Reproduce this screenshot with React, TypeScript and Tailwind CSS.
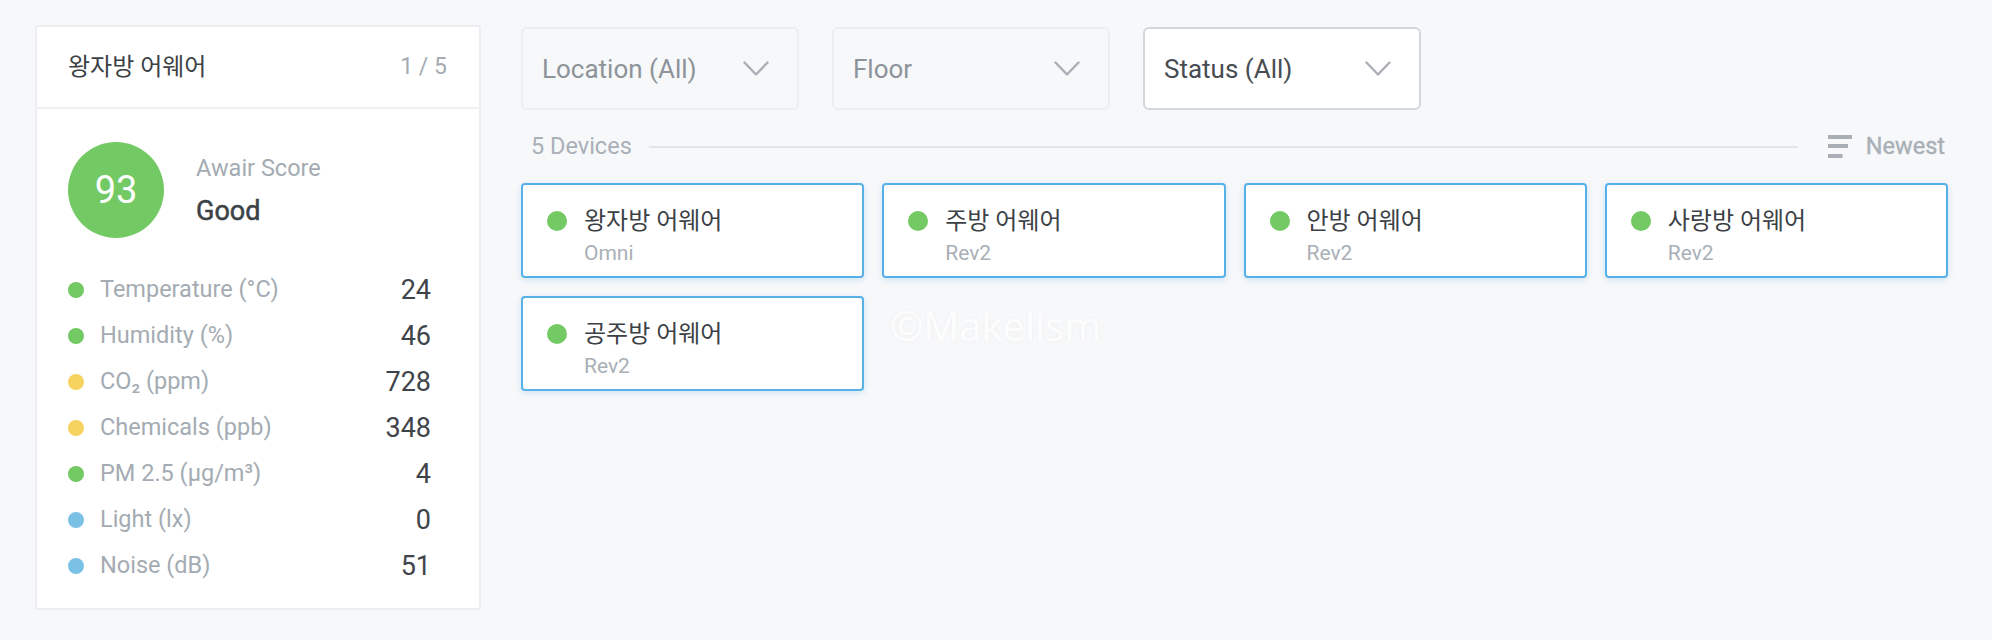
const FONT = "font-['Roboto','Noto_Sans_CJK_KR',sans-serif]";

type Reading = { label: React.ReactNode; value: string; color: string };

const readings: Reading[] = [
  { label: "Temperature (°C)", value: "24", color: "bg-[#73c964]" },
  { label: "Humidity (%)", value: "46", color: "bg-[#73c964]" },
  { label: "CO₂ (ppm)", value: "728", color: "bg-[#f6d35e]" },
  { label: "Chemicals (ppb)", value: "348", color: "bg-[#f6d35e]" },
  { label: "PM 2.5 (µg/m³)", value: "4", color: "bg-[#73c964]" },
  { label: "Light (lx)", value: "0", color: "bg-[#7bc1e5]" },
  { label: "Noise (dB)", value: "51", color: "bg-[#7bc1e5]" },
];

const devices = [
  { name: "왕자방 어웨어", model: "Omni" },
  { name: "주방 어웨어", model: "Rev2" },
  { name: "안방 어웨어", model: "Rev2" },
  { name: "사랑방 어웨어", model: "Rev2" },
  { name: "공주방 어웨어", model: "Rev2" },
];

function Chevron() {
  return (
    <svg width="26" height="16" viewBox="0 0 26 16" fill="none" className="shrink-0">
      <path d="M1.5 1.5 L13 13.5 L24.5 1.5" stroke="#a9afb5" strokeWidth="2.4" strokeLinecap="round" strokeLinejoin="round" />
    </svg>
  );
}

function Filter({ label, active }: { label: string; active?: boolean }) {
  return (
    <div
      className={`flex h-[83px] w-[278px] items-center justify-between rounded-[6px] border-2 pl-[19px] pr-[28px] ${
        active ? "border-[#d3d7dc] bg-white text-[#474c52]" : "border-[#eceef1] bg-[#f7f8fa] text-[#8d9399]"
      }`}
    >
      <span className="text-[26px] leading-none">{label}</span>
      <Chevron />
    </div>
  );
}

function SummaryPanel() {
  return (
    <aside className="w-[446px] shrink-0 rounded-[3px] border-2 border-[#eceef1] bg-white">
      <div className="flex h-[82px] items-center justify-between border-b-2 border-[#eff1f3] pl-[31px] pr-[32px]">
        <span className="text-[24px] text-[#3c4146]">왕자방 어웨어</span>
        <span className="text-[23px] text-[#a4abb2]">1 / 5</span>
      </div>
      <div className="pb-[19px] pl-[31px] pr-[48px] pt-[33px]">
        <div className="flex items-center gap-[32px]">
          <div className="flex h-[96px] w-[96px] items-center justify-center rounded-full bg-[#73c964] text-[38px] text-white">
            93
          </div>
          <div className="flex flex-col">
            <span className="text-[23.5px] leading-[30px] text-[#a4abb2]">Awair Score</span>
            <span className="mt-[12px] text-[27px] leading-[32px] text-[#3c4146] [-webkit-text-stroke:0.5px_#3c4146]">
              Good
            </span>
          </div>
        </div>
        <ul className="mt-[29px]">
          {readings.map((r) => (
            <li key={r.value + r.color} className="flex h-[46px] items-center">
              <span className={`h-[16px] w-[16px] rounded-full ${r.color}`} />
              <span className="ml-[16px] flex-1 text-[23.5px] text-[#a4abb2]">{r.label}</span>
              <span className="text-[27px] text-[#3f444a]">{r.value}</span>
            </li>
          ))}
        </ul>
      </div>
    </aside>
  );
}

function SortIcon() {
  return (
    <svg width="24" height="23" viewBox="0 0 24 23" className="shrink-0">
      <rect x="0" y="0" width="24" height="4" fill="#a9afb5" />
      <rect x="0" y="9" width="20" height="4" fill="#a9afb5" />
      <rect x="0" y="19" width="14.5" height="4" fill="#a9afb5" />
    </svg>
  );
}

function DeviceCard({ name, model }: { name: string; model: string }) {
  return (
    <div className="h-[95px] rounded-[4px] border-2 border-[#58b0e8] bg-white pl-[24px] pt-[20px] shadow-[0_2px_6px_rgba(88,176,232,0.25)]">
      <div className="flex items-center gap-[17px]">
        <span className="h-[20px] w-[20px] rounded-full bg-[#73c964]" />
        <span className="text-[24px] leading-[32px] text-[#3c4146]">{name}</span>
      </div>
      <div className="ml-[37px] mt-[3px] text-[21px] leading-[26px] text-[#a9b0b7]">{model}</div>
    </div>
  );
}

export default function App() {
  return (
    <div className={`${FONT} relative flex h-[640px] w-[1992px] gap-[40px] bg-[#f7f8fa] pl-[35px] pt-[25px]`}>
      <div className="h-[585px]">
        <SummaryPanel />
      </div>
      <main className="w-[1427px]">
        <div className="mt-[2px] flex gap-[33px]">
          <Filter label="Location (All)" />
          <Filter label="Floor" />
          <Filter label="Status (All)" active />
        </div>
        <div className="mt-[20px] flex h-[33px] items-center pl-[10px] pr-[3px]">
          <span className="text-[23.5px] text-[#a9b0b7]">5 Devices</span>
          <div className="ml-[17px] mr-[30px] h-[2px] flex-1 bg-[#e3e6e9]" />
          <SortIcon />
          <span className="ml-[14px] text-[23.5px] text-[#a9b0b7] [-webkit-text-stroke:0.4px_#a9b0b7]">Newest</span>
        </div>
        <div className="mt-[20px] grid grid-cols-4 gap-[18px]">
          {devices.map((d) => (
            <DeviceCard key={d.name} name={d.name} model={d.model} />
          ))}
        </div>
      </main>
      <div className="pointer-events-none absolute left-[890px] top-[296px] font-['Open_Sans',sans-serif] text-[40px] text-white/80 [text-shadow:0_0_4px_rgba(0,0,0,0.04)]">
        ©Makelism
      </div>
    </div>
  );
}
